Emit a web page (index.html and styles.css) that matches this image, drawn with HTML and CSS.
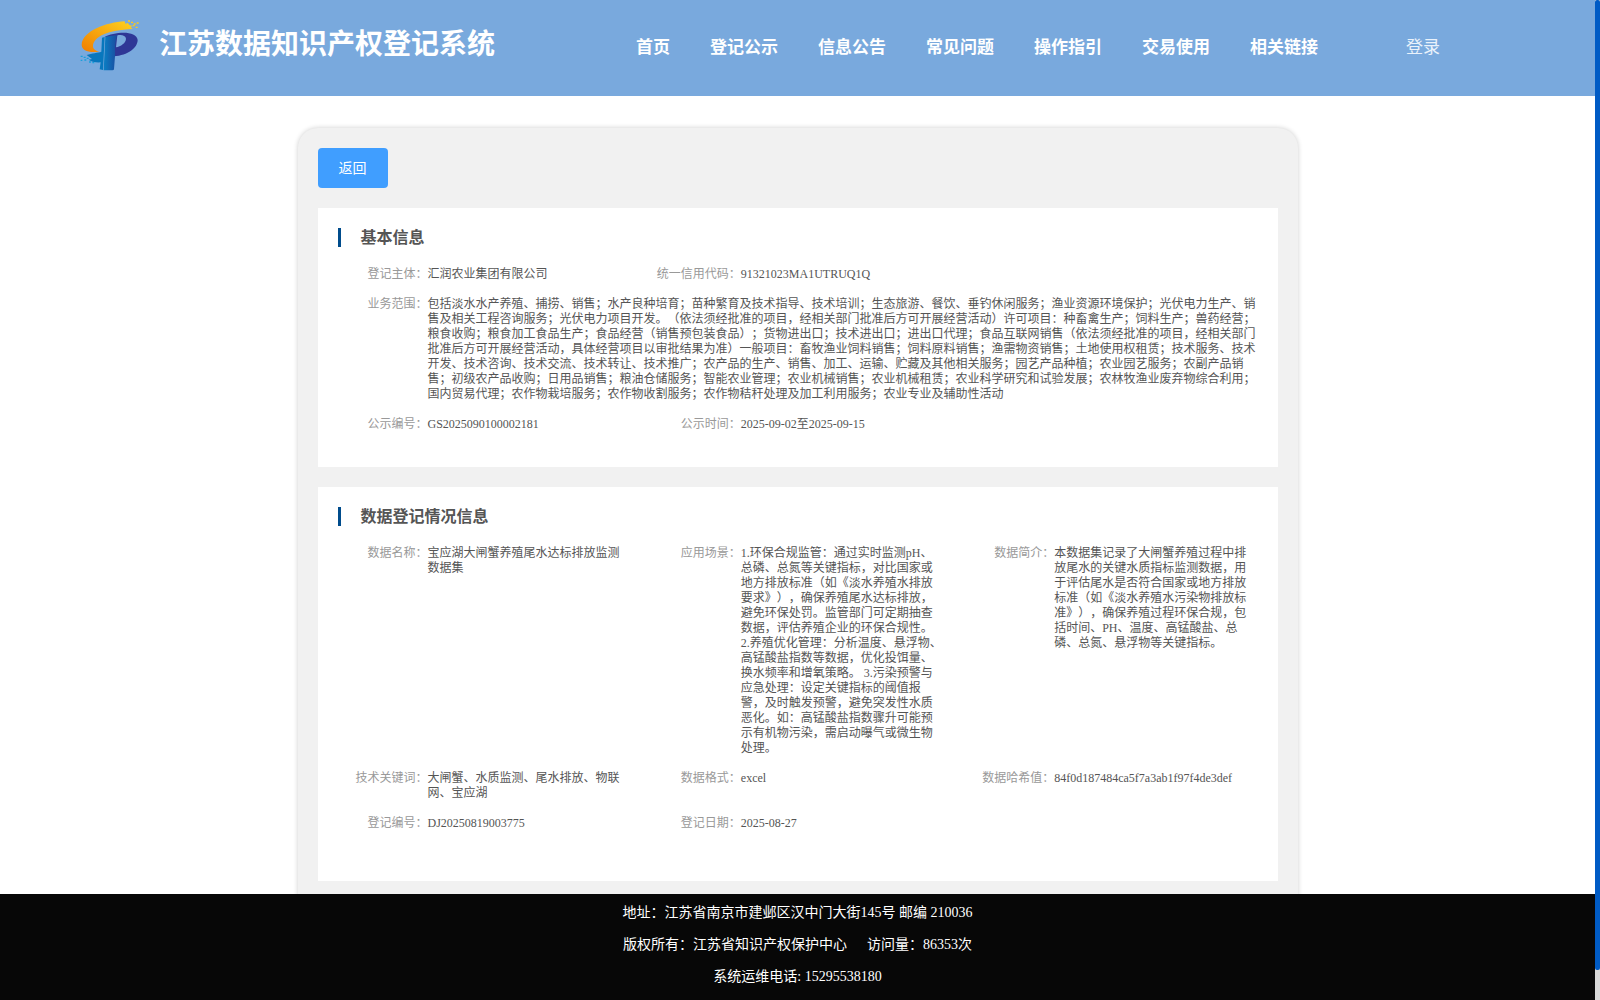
FILE: index.html
```
<!DOCTYPE html>
<html lang="zh-CN">
<head>
    <meta charset="UTF-8">
    <meta name="viewport" content="width=device-width, initial-scale=1.0">
    <title>江苏数据知识产权登记系统</title>
    <link rel="stylesheet" href="styles.css">
</head>
<body>

    <div class="page">
        <header class="header">
            <svg class="logo" viewBox="60 56 180 156" aria-hidden="true">
                <defs>
                    <linearGradient id="orange" x1="0" y1="1" x2="1" y2="0">
                        <stop offset="0" stop-color="#f07d00"/>
                        <stop offset="1" stop-color="#ffd21f"/>
                    </linearGradient>
                    <linearGradient id="blue" x1="0" y1="0" x2="1" y2="0">
                        <stop offset="0" stop-color="#0a7fc4"/>
                        <stop offset="1" stop-color="#1c4a9e"/>
                    </linearGradient>
                </defs>
                <path fill="url(#orange)" d="M194 63C140 66 66 92 65 134C66 150 84 158 118 154C102 150 98 144 99 134C104 108 142 90 218 86L212 81L217 77L208 74L204 68L196 70Z"/>
                <path fill="#fdc91c" d="M204 60h6v4h-6zM213 64h6v4h-6zM221 69h6v4h-6zM230 66h6v4h-6zM218 74h6v4h-6zM227 79h6v4h-6z"/>
                <path fill="#2f3796" fill-rule="evenodd" d="M134 110C160 95 230 88 233 119C233 142 204 165 162 168L160 112ZM172 105L168 141C182 138 198 128 198 115C197 105 184 102 172 105Z"/>
                <path fill="url(#blue)" d="M136 109L172 104Q164 124 165 168L162 206Q162 210 157 210L131 210Z"/>
                <path fill="#0877bd" d="M126 112L134 110L129 209L119 207L122 186C106 187 92 183 86 178L96 176L88 170L80 164C96 158 114 158 124 154Z"/>
                <path fill="#18a0dc" d="M62 166h6v4h-6zM71 169h6v4h-6zM80 172h6v4h-6zM62 178h5v4h-5zM73 177h6v4h-6zM87 183h6v4h-6zM97 185h6v4h-6z"/>
            </svg>
            <h1 class="site-title">江苏数据知识产权登记系统</h1>
            <nav class="nav">
                <a href="#">首页</a>
                <a href="#">登记公示</a>
                <a href="#">信息公告</a>
                <a href="#">常见问题</a>
                <a href="#">操作指引</a>
                <a href="#">交易使用</a>
                <a href="#">相关链接</a>
            </nav>
            <a class="login" href="#">登录</a>
        </header>

        <main class="main">
            <div class="container">
                <button class="back-button" type="button">返回</button>

                <section class="info-box">
                    <h2>基本信息</h2>
                    <dl class="info-grid">
                        <div class="info-item">
                            <dt>登记主体：</dt>
                            <dd>汇润农业集团有限公司</dd>
                        </div>
                        <div class="info-item">
                            <dt>统一信用代码：</dt>
                            <dd>91321023MA1UTRUQ1Q</dd>
                        </div>
                        <div class="info-item wide">
                            <dt>业务范围：</dt>
                            <dd>包括淡水水产养殖、捕捞、销售；水产良种培育；苗种繁育及技术指导、技术培训；生态旅游、餐饮、垂钓休闲服务；渔业资源环境保护；光伏电力生产、销售及相关工程咨询服务；光伏电力项目开发。（依法须经批准的项目，经相关部门批准后方可开展经营活动）许可项目：种畜禽生产；饲料生产；兽药经营；粮食收购；粮食加工食品生产；食品经营（销售预包装食品）；货物进出口；技术进出口；进出口代理；食品互联网销售（依法须经批准的项目，经相关部门批准后方可开展经营活动，具体经营项目以审批结果为准）一般项目：畜牧渔业饲料销售；饲料原料销售；渔需物资销售；土地使用权租赁；技术服务、技术开发、技术咨询、技术交流、技术转让、技术推广；农产品的生产、销售、加工、运输、贮藏及其他相关服务；园艺产品种植；农业园艺服务；农副产品销售；初级农产品收购；日用品销售；粮油仓储服务；智能农业管理；农业机械销售；农业机械租赁；农业科学研究和试验发展；农林牧渔业废弃物综合利用；国内贸易代理；农作物栽培服务；农作物收割服务；农作物秸秆处理及加工利用服务；农业专业及辅助性活动</dd>
                        </div>
                        <div class="info-item">
                            <dt>公示编号：</dt>
                            <dd>GS2025090100002181</dd>
                        </div>
                        <div class="info-item">
                            <dt>公示时间：</dt>
                            <dd>2025-09-02至2025-09-15</dd>
                        </div>
                    </dl>
                </section>

                <section class="info-box data-box">
                    <h2>数据登记情况信息</h2>
                    <dl class="info-grid">
                        <div class="info-item">
                            <dt>数据名称：</dt>
                            <dd>宝应湖大闸蟹养殖尾水达标排放监测数据集</dd>
                        </div>
                        <div class="info-item">
                            <dt>应用场景：</dt>
                            <dd>1.环保合规监管：通过实时监测pH、总磷、总氮等关键指标，对比国家或地方排放标准（如《淡水养殖水排放要求》），确保养殖尾水达标排放，避免环保处罚。监管部门可定期抽查数据，评估养殖企业的环保合规性。 2.养殖优化管理：分析温度、悬浮物、高锰酸盐指数等数据，优化投饵量、换水频率和增氧策略。 3.污染预警与应急处理：设定关键指标的阈值报警，及时触发预警，避免突发性水质恶化。如：高锰酸盐指数骤升可能预示有机物污染，需启动曝气或微生物处理。</dd>
                        </div>
                        <div class="info-item">
                            <dt>数据简介：</dt>
                            <dd>本数据集记录了大闸蟹养殖过程中排放尾水的关键水质指标监测数据，用于评估尾水是否符合国家或地方排放标准（如《淡水养殖水污染物排放标准》），确保养殖过程环保合规，包括时间、PH、温度、高锰酸盐、总磷、总氮、悬浮物等关键指标。</dd>
                        </div>
                        <div class="info-item">
                            <dt>技术关键词：</dt>
                            <dd>大闸蟹、水质监测、尾水排放、物联网、宝应湖</dd>
                        </div>
                        <div class="info-item">
                            <dt>数据格式：</dt>
                            <dd>excel</dd>
                        </div>
                        <div class="info-item">
                            <dt>数据哈希值：</dt>
                            <dd>84f0d187484ca5f7a3ab1f97f4de3def</dd>
                        </div>
                        <div class="info-item">
                            <dt>登记编号：</dt>
                            <dd>DJ20250819003775</dd>
                        </div>
                        <div class="info-item">
                            <dt>登记日期：</dt>
                            <dd>2025-08-27</dd>
                        </div>
                    </dl>
                </section>
            </div>
        </main>

        <footer class="footer">
            <p>地址：江苏省南京市建邺区汉中门大街145号 邮编 210036</p>
            <p><span>版权所有：江苏省知识产权保护中心</span><span class="visits">访问量：86353次</span></p>
            <p>系统运维电话: 15295538180</p>
        </footer>
    </div>

    <div class="scroll-track">
        <div class="scroll-thumb"></div>
    </div>

</body>
</html>
```
FILE: styles.css
```
:root {
    --header-bg: #79a9dd;
    --button-bg: #409eff;
    --panel-bg: #f1f1f1;
    --bar-color: #004c8c;
    --text-color: #555555;
    --label-color: #999999;
}

* {
    box-sizing: border-box;
}

body {
    display: flex;
    height: 100vh;
    margin: 0;
    overflow: hidden;
    font-family: "Liberation Serif", "Noto Sans CJK SC", serif;
    text-spacing-trim: space-all;
    background-color: #fff;
}

.page {
    display: flex;
    flex: 1;
    flex-direction: column;
    min-width: 0;
}

.header {
    display: flex;
    flex-shrink: 0;
    align-items: center;
    height: 96px;
    padding: 0 80px 6px;
    background-color: var(--header-bg);
    color: #fff;
    white-space: nowrap;
}

.header a {
    color: #fff;
    text-decoration: none;
}

.logo {
    width: 60px;
    height: 52px;
}

.site-title {
    margin: 0 0 0 19px;
    font-size: 28px;
    line-height: 36px;
}

.nav {
    display: flex;
    gap: 40px;
    margin-left: 141px;
    font-size: 17px;
    font-weight: bold;
}

.header .login {
    margin-left: 88px;
    color: #eaf2fb;
    font-size: 17px;
}

.main {
    flex: 1;
    min-height: 0;
    padding-top: 32px;
    overflow: hidden;
}

.container {
    max-width: 1000px;
    margin: 0 auto;
    padding: 20px 20px 40px;
    border-radius: 20px;
    background-color: var(--panel-bg);
    box-shadow: 0 0 5px rgba(0, 0, 0, 0.2);
}

.back-button {
    display: block;
    width: 70px;
    height: 40px;
    padding: 0 0 2px;
    border: none;
    border-radius: 4px;
    background-color: var(--button-bg);
    color: #fff;
    font-family: inherit;
    font-size: 14px;
    cursor: pointer;
}

.info-box {
    margin-top: 20px;
    padding: 20px 0 20px 20px;
    background-color: #fff;
    color: var(--text-color);
}

.data-box {
    padding-bottom: 35px;
}

.info-box h2 {
    margin: 0 0 20px;
    padding-left: 20px;
    border-left: 3px solid var(--bar-color);
    font-size: 16px;
    line-height: 19px;
}

.info-grid {
    display: grid;
    grid-template-columns: repeat(3, 1fr);
    margin: 0;
    font-size: 12px;
    line-height: 15px;
}

.info-item {
    display: flex;
    padding: 0 20px 15px 0;
}

.info-item.wide {
    grid-column: 1 / -1;
}

.info-item dt {
    flex: 0 0 90px;
    color: var(--label-color);
    text-align: right;
}

.info-item dd {
    flex: 1;
    min-width: 0;
    margin: 0;
}

.footer {
    flex-shrink: 0;
    padding: 3px 0 7px;
    background-color: #070707;
    color: #fff;
    font-size: 14px;
    line-height: 32px;
    text-align: center;
}

.footer p {
    margin: 0;
}

.visits {
    margin-left: 20px;
}

.scroll-track {
    width: 5px;
    background-color: #d8d8d8;
}

.scroll-thumb {
    height: 97%;
    border-radius: 2px;
    background-color: #005bc5;
}
```
